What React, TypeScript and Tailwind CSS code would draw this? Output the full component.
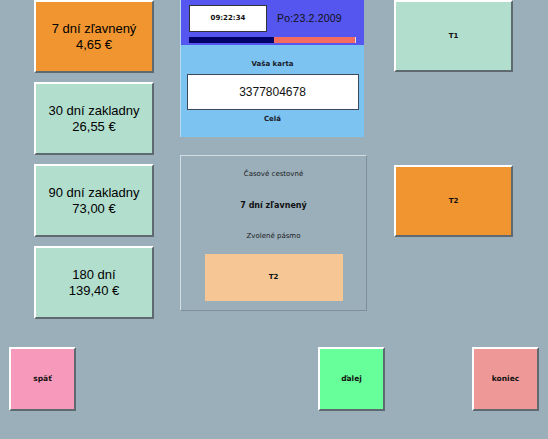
import type { ReactNode } from "react"

const sans = "font-['Liberation_Sans',Arial,sans-serif]"
const dv = "font-['DejaVu_Sans',Verdana,sans-serif]"

// raised kiosk button with a white top/left edge and a dark bottom/right edge
function Bevel({ className, children }: { className: string; children: ReactNode }) {
  return (
    <div
      className={`flex flex-col items-center justify-center border-2 border-t-white border-l-white border-r-[#5f6a70] border-b-[#5f6a70] ${className}`}
    >
      {children}
    </div>
  )
}

const tickets = [
  { name: "7 dní zľavnený", price: "4,65 €", color: "bg-[#f0952f]" },
  { name: "30 dní zakladny", price: "26,55 €", color: "bg-[#b2dece]" },
  { name: "90 dní zakladny", price: "73,00 €", color: "bg-[#b2dece]" },
  { name: "180 dní", price: "139,40 €", color: "bg-[#b2dece]" },
]

export default function App() {
  return (
    <div className="w-[548px] h-[439px] bg-[#9aafba] flex flex-col overflow-hidden">
      <div className="flex h-[347px]">
        {/* ticket types */}
        <div className="flex flex-col gap-[9px] pl-[34px] w-[154px]">
          {tickets.map((t) => (
            <Bevel key={t.name} className={`w-[120px] h-[73px] ${t.color}`}>
              <span className={`${sans} text-[13px] leading-[16px] text-black`}>{t.name}</span>
              <span className={`${sans} text-[13px] leading-[16px] text-black`}>{t.price}</span>
            </Bevel>
          ))}
        </div>

        {/* card + summary */}
        <div className="ml-[26px] w-[186px] flex flex-col">
          <div className="w-[184px] h-[137px] flex flex-col border-l border-[#b8d8ee]">
            <div className="h-[45px] bg-[#5555ef] px-[8px] pt-[5px]">
              <div className="flex items-center">
                <div className={`${dv} w-[78px] h-[27px] bg-white border border-[#333] flex items-center justify-center text-[7px] font-bold text-[#111]`}>
                  09:22:34
                </div>
                <span className={`${sans} ml-[10px] text-[10.5px] tracking-[0.2px] text-[#111]`}>Po:23.2.2009</span>
              </div>
              <div className="flex mt-[5px] h-[6px]">
                <div className="w-[87px] bg-[#000066]" />
                <div className="w-[84px] bg-[#f46b62] border-r border-[#f4d4d4]" />
              </div>
            </div>
            <div className="flex-1 bg-[#7cc3f2] flex flex-col items-center pt-[15px]">
              <span className={`${dv} text-[7px] leading-[9px] font-bold text-[#1a1a2a]`}>Vaša karta</span>
              <div className={`${sans} mt-[5px] w-[172px] h-[36px] bg-white border border-[#3a4a5a] flex items-center justify-center text-[12px] text-[#111]`}>
                3377804678
              </div>
              <span className={`${dv} mt-[5px] text-[7px] leading-[9px] font-bold text-[#1a1a2a]`}>Celá</span>
            </div>
          </div>

          <div className="mt-[18px] w-[187px] h-[156px] border border-t-[#d4dde2] border-l-[#d4dde2] border-r-[#7d8f99] border-b-[#7d8f99] flex flex-col items-center">
            <span className={`${dv} mt-[14px] text-[7px] leading-[9px] text-[#1a1a1a]`}>Časové cestovné</span>
            <span className={`${dv} mt-[21px] text-[8px] leading-[11px] font-bold text-[#111]`}>7 dní zľavnený</span>
            <span className={`${dv} mt-[21px] text-[7px] leading-[9px] text-[#1a1a1a]`}>Zvolené pásmo</span>
            <div className={`${dv} mt-[13px] w-[138px] h-[47px] bg-[#f6c795] flex items-center justify-center text-[7px] font-bold text-[#111]`}>
              T2
            </div>
          </div>
        </div>

        {/* zones */}
        <div className="ml-[28px] flex flex-col gap-[93px]">
          <Bevel className={`${dv} w-[119px] h-[72px] bg-[#b2dece] text-[7px] font-bold text-[#111]`}>T1</Bevel>
          <Bevel className={`${dv} w-[119px] h-[72px] bg-[#f0952f] text-[7px] font-bold text-[#111]`}>T2</Bevel>
        </div>
      </div>

      {/* navigation */}
      <div className="flex pl-[9px]">
        <Bevel className={`${dv} w-[67px] h-[64px] bg-[#f799ba] text-[7.5px] font-bold text-[#111]`}>späť</Bevel>
        <Bevel className={`${dv} ml-[242px] w-[67px] h-[64px] bg-[#66ff99] text-[7.5px] font-bold text-[#111]`}>ďalej</Bevel>
        <Bevel className={`${dv} ml-[87px] w-[67px] h-[64px] bg-[#ee9898] text-[7.5px] font-bold text-[#111]`}>koniec</Bevel>
      </div>
    </div>
  )
}
